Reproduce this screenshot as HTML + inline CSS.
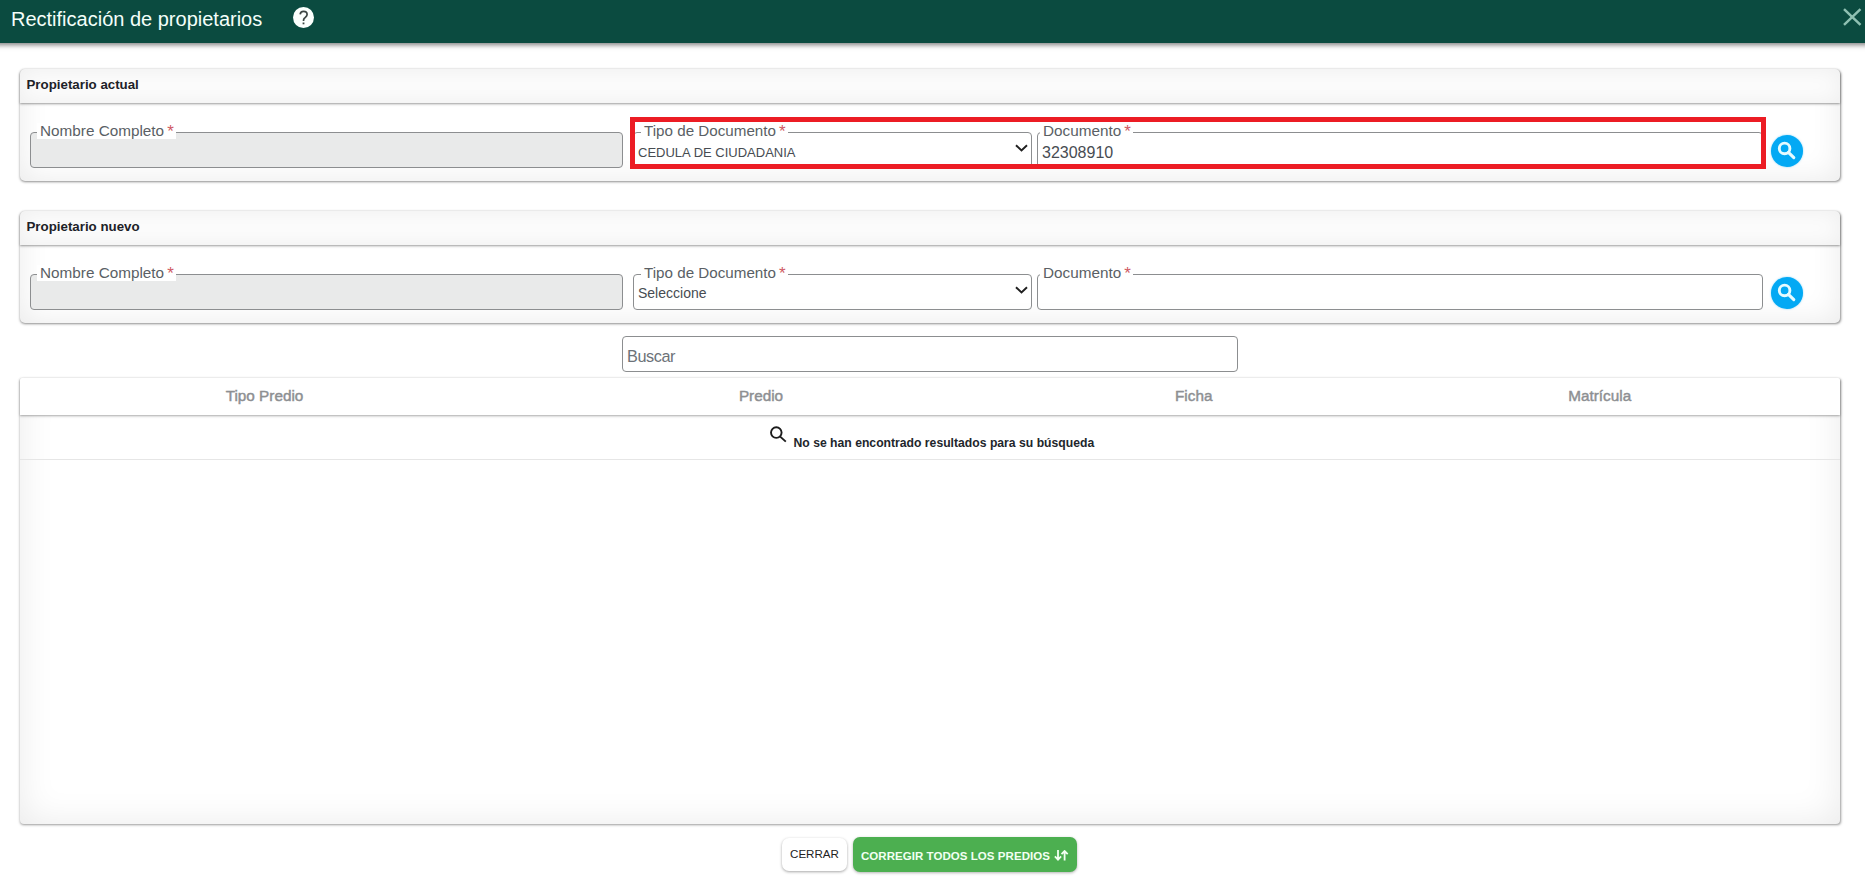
<!DOCTYPE html>
<html><head><meta charset="utf-8">
<style>
*{box-sizing:border-box;margin:0;padding:0}
html{background:#fff}
html,body{width:1865px;height:883px;overflow:hidden;font-family:"Liberation Sans",sans-serif}
.abs{position:absolute}
#hdr{position:absolute;left:0;top:0;width:1865px;height:43px;background:#0b4b40}
#hdr:before{content:"";position:absolute;left:-20px;right:-20px;top:0;height:43px;box-shadow:0 2px 5px rgba(0,0,0,.5);z-index:-1}
#title{position:absolute;left:11px;top:7px;font-size:20px;line-height:24px;color:#f4fffa;white-space:nowrap}
#help{position:absolute;left:293px;top:7px;width:21px;height:21px}
.card{position:absolute;left:19.5px;width:1820.5px;border-radius:5px;background:#fff;box-shadow:0.5px 1px 2.5px rgba(0,0,0,.45), inset 0 0 30px rgba(0,0,0,.085)}
.chd{position:absolute;left:0;top:0;width:100%;height:34.5px;border-radius:5px 5px 0 0;background:#fcfcfc;box-shadow:0 1px 2.5px rgba(0,0,0,.4), inset 0 0 22px rgba(0,0,0,.06)}
.chd span{position:absolute;left:7px;top:8px;font-weight:bold;font-size:13.3px;line-height:16px;color:#1e2228;white-space:nowrap}
.fld{position:absolute;height:36px;border:1.3px solid #8c8e90;border-radius:4px;background:rgba(255,255,255,.5)}
.fld.dis{background:#e9eaea}
.lbl{position:absolute;top:-10.5px;padding:0 2px 0 3px;font-size:15.3px;line-height:16px;color:#5a5f65;white-space:nowrap;background:#fff}
.lbl i{font-style:normal;color:#cf5a64;margin-left:3px;font-size:17px;line-height:10px;position:relative;top:1.5px}
.val{position:absolute;white-space:nowrap;color:#474c52}
.chev{position:absolute;width:13px;height:8px}
.sbtn{position:absolute;width:32px;height:32px;border-radius:50%;background:#03a9f4;box-shadow:0 0 2px rgba(3,169,244,.5)}
#red{position:absolute;left:630px;top:117px;width:1136px;height:52px;border:5px solid #ec1c24}
#buscar{position:absolute;left:622px;top:336px;width:616px;height:36px;border:1.3px solid #8c8e90;border-radius:4px;background:#fff}
#buscar span{position:absolute;left:4px;top:10px;font-size:16.3px;letter-spacing:-0.45px;line-height:18px;color:#6c7278}
#tbl{position:absolute;left:19.5px;top:377.5px;width:1820.5px;height:446.5px;border-radius:2px 2px 4px 4px;background:#fff;box-shadow:0.3px 1px 2.5px rgba(0,0,0,.4), inset 0 0 36px rgba(0,0,0,.085)}
#thd{position:absolute;left:0;top:0;width:100%;height:37.5px;background:#fff;border-radius:2px 2px 0 0;box-shadow:0 1px 2.5px rgba(0,0,0,.35)}
.th{position:absolute;top:10px;width:200px;text-align:center;font-weight:normal;font-size:15.3px;-webkit-text-stroke:0.45px #8d8f92;line-height:16px;color:#8d8f92;white-space:nowrap}
#row{position:absolute;left:0;top:38.5px;width:100%;height:44px;border-bottom:1px solid #e6e6e6;background:transparent}
#nores{position:absolute;left:774px;top:58.5px;font-weight:bold;font-size:12.2px;line-height:14px;color:#22262b;white-space:nowrap}
.btn{position:absolute;border-radius:7px;white-space:nowrap}
#cerrar{left:782px;top:838px;width:65px;height:33px;background:#fff;box-shadow:0 1px 3px rgba(0,0,0,.35);font-size:11.6px;color:#222;line-height:32px;text-align:center}
#corr{left:853px;top:837px;width:224px;height:35px;background:#4caf50;box-shadow:0 1px 3px rgba(0,0,0,.3);font-weight:bold;font-size:11.5px;letter-spacing:0.05px;color:#f2fff2;line-height:38.5px;padding-left:8px}
</style></head><body>
<div id="hdr">
  <div id="title">Rectificación de propietarios</div>
  <svg id="help" viewBox="0 0 21 21"><circle cx="10.5" cy="10.5" r="10.5" fill="#fbfffd"/><path d="M7.2 7.4C7.3 5.4 8.8 4.3 10.6 4.3C12.6 4.3 14.1 5.6 14.1 7.5C14.1 9.4 12.4 10.1 11.3 11.4C10.7 12.1 10.5 12.8 10.5 13.9" fill="none" stroke="#3b4442" stroke-width="1.7"/><rect x="9.6" y="15.5" width="1.8" height="1.8" fill="#3b4442"/></svg>
  <svg class="abs" style="left:1842px;top:7px" width="20" height="20" viewBox="0 0 20 20"><path d="M2 2.2L18.5 17.8M18.5 2.2L2 17.8" stroke="#8fc0b2" stroke-width="2.5"/></svg>
</div>

<!-- Card 1 -->
<div class="card" style="top:68.5px;height:112.5px">
  <div class="chd"><span>Propietario actual</span></div>
</div>
<div class="fld dis" style="left:30px;top:132px;width:593px"><div class="lbl" style="left:6px">Nombre Completo<i>*</i></div></div>
<div class="fld" style="left:633px;top:132px;width:399px"><div class="lbl" style="left:7px;font-size:15.2px">Tipo de Documento<i>*</i></div>
  <div class="val" style="left:4px;top:12px;font-size:13px;line-height:16px">CEDULA DE CIUDADANIA</div>
  <svg class="chev" style="left:380.5px;top:11px" viewBox="0 0 13 8"><path d="M1 1.2L6.5 6.4L12 1.2" fill="none" stroke="#1f1f1f" stroke-width="1.9"/></svg>
</div>
<div class="fld" style="left:1037px;top:132px;width:726px"><div class="lbl" style="left:2px">Documento<i>*</i></div>
  <div class="val" style="left:4px;top:11px;font-size:16px;line-height:18px">32308910</div>
</div>
<div class="sbtn" style="left:1771px;top:135px"><svg width="32" height="32" viewBox="0 0 32 32"><circle cx="13.6" cy="13.4" r="5.3" fill="none" stroke="#e6fbff" stroke-width="2.9"/><path d="M17.4 17.3L22.8 22.6" stroke="#e6fbff" stroke-width="3.1" stroke-linecap="round"/></svg></div>
<div id="red"></div>

<!-- Card 2 -->
<div class="card" style="top:210.5px;height:112.5px">
  <div class="chd"><span>Propietario nuevo</span></div>
</div>
<div class="fld dis" style="left:30px;top:274px;width:593px"><div class="lbl" style="left:6px">Nombre Completo<i>*</i></div></div>
<div class="fld" style="left:633px;top:274px;width:399px"><div class="lbl" style="left:7px;font-size:15.2px">Tipo de Documento<i>*</i></div>
  <div class="val" style="left:4px;top:10px;font-size:14px;line-height:16px">Seleccione</div>
  <svg class="chev" style="left:380.5px;top:11px" viewBox="0 0 13 8"><path d="M1 1.2L6.5 6.4L12 1.2" fill="none" stroke="#1f1f1f" stroke-width="1.9"/></svg>
</div>
<div class="fld" style="left:1037px;top:274px;width:726px"><div class="lbl" style="left:2px">Documento<i>*</i></div></div>
<div class="sbtn" style="left:1771px;top:277px"><svg width="32" height="32" viewBox="0 0 32 32"><circle cx="13.6" cy="13.4" r="5.3" fill="none" stroke="#e6fbff" stroke-width="2.9"/><path d="M17.4 17.3L22.8 22.6" stroke="#e6fbff" stroke-width="3.1" stroke-linecap="round"/></svg></div>

<div id="buscar"><span>Buscar</span></div>

<div id="tbl">
  <div id="thd">
    <div class="th" style="left:145px">Tipo Predio</div>
    <div class="th" style="left:641.5px">Predio</div>
    <div class="th" style="left:1074.2px">Ficha</div>
    <div class="th" style="left:1480.2px">Matrícula</div>
  </div>
  <div id="row">
    <svg class="abs" style="left:748px;top:9px" width="20" height="20" viewBox="0 0 20 20"><circle cx="8.3" cy="7.6" r="5.3" fill="none" stroke="#1c1c1c" stroke-width="1.9"/><path d="M12.2 11.6L17.8 16.6" stroke="#1c1c1c" stroke-width="1.9"/></svg>
  </div>
  <div id="nores">No se han encontrado resultados para su búsqueda</div>
</div>

<div class="btn" id="cerrar">CERRAR</div>
<div class="btn" id="corr">CORREGIR TODOS LOS PREDIOS<svg class="abs" style="left:200.5px;top:13px" width="15" height="11" viewBox="0 0 15 11"><path d="M4 0V9.6M0.9 6.4L4 9.6L7.1 6.4M10.6 10.5V1M7.5 4.1L10.6 1L13.7 4.1" fill="none" stroke="#f2fff2" stroke-width="1.8"/></svg></div>
</body></html>
